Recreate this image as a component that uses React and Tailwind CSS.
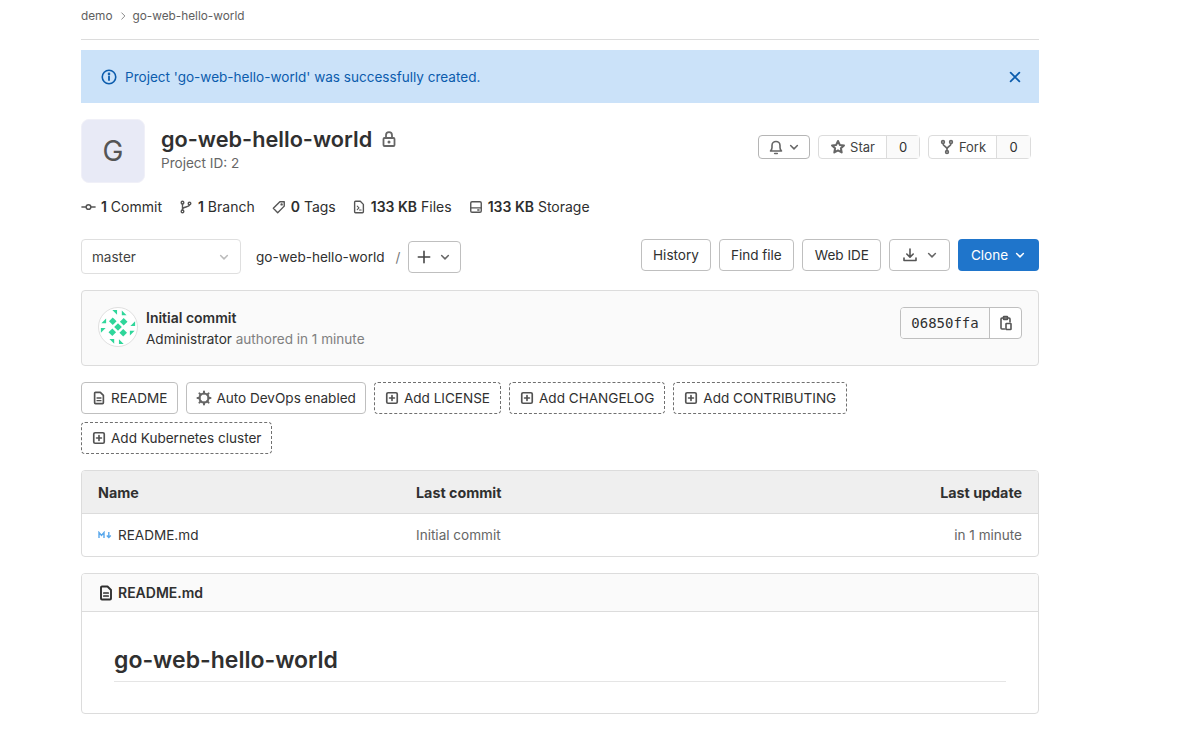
import React from 'react'

const Icon = ({ className = 'w-4 h-4', children }) => (
  <svg viewBox="0 0 16 16" fill="none" stroke="currentColor" strokeWidth="1.6" strokeLinecap="round" strokeLinejoin="round" className={`shrink-0 ${className}`}>
    {children}
  </svg>
)

const Chevron = ({ className = '' }) => (
  <Icon className={`w-3 h-3 ${className}`}>
    <path d="M3.5 6l4.5 4.5L12.5 6" strokeWidth="2" />
  </Icon>
)

const DocIcon = ({ className }) => (
  <Icon className={className}>
    <path d="M3 2.500a1 1 0 0 1 1-1h5.500L13 5v8.500a1 1 0 0 1-1 1H4a1 1 0 0 1-1-1z" strokeWidth="1.900" />
    <path d="M5.800 8h4.400M5.800 11h4.400" strokeWidth="1.700" />
  </Icon>
)

const AddIcon = () => (
  <Icon className="w-3.5 h-3.5 text-[#525252]">
    <rect x="2" y="2" width="12" height="12" rx="1.500" strokeWidth="1.900" />
    <path d="M8 5.200v5.600M5.200 8h5.600" strokeWidth="1.900" />
  </Icon>
)

const Stat = ({ icon, value, label, className = '' }) => (
  <div className={`flex items-center gap-[5px] ${className}`}>
    {icon}
    <span className="text-sm text-[#2e2e2e]"><span className="font-semibold">{value}</span> {label}</span>
  </div>
)

const Button = ({ children, className = '' }) => (
  <div className={`h-8 flex items-center rounded border border-[#bfbfbf] bg-white text-[#303030] ${className}`}>{children}</div>
)

const Shortcut = ({ icon, label, dashed }) => (
  <div className={`h-8 flex items-center gap-[5px] pl-[10px] pr-[10px] rounded border ${dashed ? 'border-dashed border-[#707070]' : 'border-[#bfbfbf]'} text-[#303030]`}>
    {icon}
    <span>{label}</span>
  </div>
)

// the identicon repeats one quadrant four times
const AvatarQuadrant = () => (
  <g fill="#2fd69a">
    <path d="M14 2l5 0 0 5z" />
    <path d="M24 2.500l5 5h-5z" />
    <path d="M14.500 10l4 4-4 4-4-4z" />
  </g>
)

const Avatar = () => (
  <svg viewBox="0 0 40 40" className="w-10 h-10 shrink-0 rounded-full border border-[#e0e0e0] bg-white">
    <AvatarQuadrant />
    <g transform="rotate(90 20 20)"><AvatarQuadrant /></g>
    <g transform="rotate(180 20 20)"><AvatarQuadrant /></g>
    <g transform="rotate(270 20 20)"><AvatarQuadrant /></g>
    <path d="M20 16l4 4-4 4-4-4z" fill="#2fd69a" />
  </svg>
)

const App = () => {
  return (
    <div className="min-h-[752px] bg-white pl-[81px] pr-[155px] text-[13.55px] leading-[22px] text-[#303030] font-['Inter',sans-serif]">
      {/* Breadcrumb */}
      <div className="h-10 flex items-center gap-[5px] pb-[7px] border-b border-[#dcdcdc] text-[11.8px] text-[#5e5e5e]">
        <span>demo</span>
        <Icon className="w-2.5 h-2.5 text-[#8a8a8a]"><path d="M6 3l5 5-5 5" /></Icon>
        <span>go-web-hello-world</span>
      </div>

      {/* Flash */}
      <div className="mt-2.5 h-[53px] flex items-center justify-between pl-5 pr-[17px] bg-[#cbe2f9] text-[#0b5cad]">
        <div className="flex items-center gap-2">
          <Icon>
            <circle cx="8" cy="8" r="6.750" />
            <path d="M8 7.500v3.500" strokeWidth="1.800" />
            <circle cx="8" cy="4.900" r="0.500" fill="currentColor" />
          </Icon>
          <span>Project 'go-web-hello-world' was successfully created.</span>
        </div>
        <Icon className="w-3.5 h-3.5">
          <path d="M3 3l10 10M13 3L3 13" strokeWidth="2" />
        </Icon>
      </div>

      {/* Project header */}
      <div className="mt-4 flex items-start justify-between">
        <div className="flex items-start gap-4">
          <div className="w-16 h-16 rounded-lg border border-[#f0f0f8] bg-[#e8eaf6] flex items-center justify-center text-[28px] text-[#555]">G</div>
          <div className="pt-[7px]">
            <div className="flex items-center gap-[9px]">
              <h1 className="text-[21.7px] leading-[26px] font-semibold text-[#303030]">go-web-hello-world</h1>
              <Icon className="w-4 h-4 text-[#666]">
                <rect x="2.500" y="7" width="11" height="8" rx="1" strokeWidth="1.800" />
                <path d="M5 7V4.200a3 3 0 0 1 6 0V7" strokeWidth="1.800" />
                <circle cx="8" cy="11" r="0.700" fill="currentColor" />
              </Icon>
            </div>
            <div className="mt-px leading-5 text-[#666]">Project ID: 2</div>
          </div>
        </div>
        <div className="mt-4 mr-2 flex items-center gap-2 text-[13px]">
          <div className="w-[52px] h-6 flex items-center justify-center gap-1 rounded border border-[#b5b5b5] text-[#666]">
            <Icon className="w-4 h-4">
              <path d="M2.500 12h11c-1-1-1.500-2-1.500-3.500V6.500a4 4 0 0 0-8 0v2C4 10 3.500 11 2.500 12z" />
              <path d="M6.700 14.500h2.600" />
            </Icon>
            <Chevron />
          </div>
          <div className="h-6 flex items-center rounded border border-[#dcdcdc]">
            <div className="w-[67px] h-full flex items-center justify-center gap-1 text-[#424242]">
              <Icon className="w-4 h-4 text-[#666]">
                <path d="M8 2l1.800 3.900 4.200.5-3.100 2.900.8 4.200L8 11.400l-3.700 2.100.8-4.200L2 6.400l4.200-.5z" strokeWidth="2" />
              </Icon>
              Star
            </div>
            <div className="w-[33px] h-full flex items-center justify-center border-l border-[#dcdcdc] bg-[#fafafa]">0</div>
          </div>
          <div className="h-6 flex items-center rounded border border-[#dcdcdc]">
            <div className="w-[67px] h-full flex items-center justify-center gap-1 text-[#424242]">
              <Icon className="w-4 h-4 text-[#666]">
                <circle cx="4" cy="3" r="1.400" />
                <circle cx="12" cy="3" r="1.400" />
                <circle cx="8" cy="13" r="1.400" />
                <path d="M4 4.500c0 3 4 3 4 5.500v1.500M12 4.500c0 3-4 3-4 5.500" />
              </Icon>
              Fork
            </div>
            <div className="w-[34px] h-full flex items-center justify-center border-l border-[#dcdcdc] bg-[#fafafa]">0</div>
          </div>
        </div>
      </div>

      {/* Stats */}
      <div className="mt-[15px] h-[18px] flex items-center gap-[17px]">
        <Stat value="1" label="Commit" icon={<Icon className="w-[15px] h-4 text-[#555]"><circle cx="8" cy="8" r="2.500" /><path d="M1 8h4.500M10.500 8H15" /></Icon>} />
        <Stat value="1" label="Branch" icon={<Icon className="w-3.5 h-3.5 text-[#555]"><circle cx="4" cy="3" r="1.500" /><circle cx="4" cy="13" r="1.500" /><circle cx="12" cy="4" r="1.500" /><path d="M4 4.500v7M12 5.500c0 3-8 2-8 5" /></Icon>} />
        <Stat value="0" label="Tags" icon={<Icon className="w-3.5 h-3.5 text-[#555]"><path d="M9 2h5v5l-7.500 7.500-5-5z" /><circle cx="11" cy="5" r="0.600" fill="currentColor" /></Icon>} />
        <Stat className="-ml-px" value="133 KB" label="Files" icon={<Icon className="w-3.5 h-3.5 text-[#555]"><path d="M3 2.500a1 1 0 0 1 1-1h5.500L13 5v8.500a1 1 0 0 1-1 1H4a1 1 0 0 1-1-1z" /><path d="M6 7l2 2-2 2M8.500 11.500h2" strokeWidth="1.200" /></Icon>} />
        <Stat value="133 KB" label="Storage" icon={<Icon className="w-3.5 h-3.5 text-[#555]"><rect x="2" y="2" width="12" height="12" rx="1.500" /><path d="M2 9h12M10 11.500h1.500" /></Icon>} />
      </div>

      {/* Toolbar */}
      <div className="mt-[23px] flex items-start justify-between">
        <div className="flex items-center">
          <div className="w-40 h-[35px] flex items-center justify-between pl-2.5 pr-2.5 rounded border border-[#dfdfdf] text-[#424242]">
            master
            <Chevron className="text-[#bbb]" />
          </div>
          <span className="ml-[15px]">go-web-hello-world</span>
          <span className="ml-[11px] text-[#777]">/</span>
          <Button className="ml-[7px] mt-px w-[53px] justify-center gap-2">
            <Icon className="w-3.5 h-3.5 text-[#444]"><path d="M8 1.500v13M1.500 8h13" strokeWidth="1.800" /></Icon>
            <Chevron className="text-[#666]" />
          </Button>
        </div>
        <div className="flex items-center gap-2">
          <Button className="px-[11px]">History</Button>
          <Button className="px-[11px]">Find file</Button>
          <Button className="pl-3 pr-[11px]">Web IDE</Button>
          <Button className="w-[61px] justify-center gap-2">
            <Icon className="w-4 h-4 text-[#555]"><path d="M8 2v8M4.800 7L8 10.200 11.200 7M2 11v2.500h12V11" /></Icon>
            <Chevron className="text-[#666]" />
          </Button>
          <div className="w-[81px] h-8 flex items-center justify-center gap-1.5 rounded bg-[#1f75cb] text-white">
            Clone
            <Chevron />
          </div>
        </div>
      </div>

      {/* Last commit */}
      <div className="mt-4 h-[76px] flex items-start justify-between pt-4 px-4 rounded border border-[#dcdcdc] bg-[#fafafa]">
        <div className="flex items-start gap-2">
          <Avatar />
          <div>
            <div className="text-sm font-semibold text-[#303030] leading-[21px]">Initial commit</div>
            <div className="mt-px leading-[21px]">Administrator <span className="text-[#808080]">authored in 1 minute</span></div>
          </div>
        </div>
        <div className="h-8 flex rounded border border-[#bfbfbf] bg-white overflow-hidden">
          <div className="w-[89px] flex items-center justify-center bg-[#fafafa] border-r border-[#bfbfbf] font-['DejaVu_Sans_Mono',monospace] text-sm text-[#303030]">06850ffa</div>
          <div className="w-[31px] flex items-center justify-center">
            <Icon className="w-4 h-4 text-[#555]">
              <path d="M6.500 14H4a1 1 0 0 1-1-1V4a1 1 0 0 1 1-1h7a1 1 0 0 1 1 1v3" />
              <rect x="5.500" y="1.500" width="4" height="3" rx="0.500" />
              <rect x="8" y="8.500" width="5" height="6" rx="0.500" />
            </Icon>
          </div>
        </div>
      </div>

      {/* Shortcuts */}
      <div className="mt-4 flex flex-wrap gap-x-2 gap-y-2">
        <Shortcut label="README" icon={<DocIcon className="w-3.5 h-3.5 text-[#525252]" />} />
        <div className="h-8 flex items-center gap-1 pl-[9px] pr-[9px] rounded border border-[#bfbfbf]">
          <Icon className="w-4 h-4 text-[#666]">
            <circle cx="8" cy="8" r="4.500" strokeWidth="2.200" />
            <path d="M8 1.500v2M8 12.500v2M1.500 8h2M12.500 8h2M3.400 3.400l1.400 1.400M11.200 11.200l1.400 1.400M12.600 3.400l-1.400 1.400M4.800 11.200l-1.400 1.400" strokeWidth="2" />
          </Icon>
          <span>Auto DevOps enabled</span>
        </div>
        <Shortcut dashed label="Add LICENSE" icon={<AddIcon />} />
        <Shortcut dashed label="Add CHANGELOG" icon={<AddIcon />} />
        <Shortcut dashed label="Add CONTRIBUTING" icon={<AddIcon />} />
        <Shortcut dashed label="Add Kubernetes cluster" icon={<AddIcon />} />
      </div>

      {/* File table */}
      <div className="mt-4 rounded border border-[#dcdcdc] overflow-hidden">
        <div className="h-[43px] grid grid-cols-[318px_1fr_auto] items-center px-4 pt-px bg-[#efefef] border-b border-[#dcdcdc] text-[14.3px] leading-[22px] font-bold text-[#303030]">
          <span>Name</span>
          <span>Last commit</span>
          <span>Last update</span>
        </div>
        <div className="h-[42px] grid grid-cols-[318px_1fr_auto] items-center px-4">
          <div className="flex items-center gap-1.5">
            <svg viewBox="0 0 14 8" className="w-[14px] h-2 text-[#5aa8ec]" fill="none" stroke="currentColor" strokeWidth="1.400">
              <path d="M1 7V1.500l2.500 3 2.500-3V7" />
              <path d="M10.800 1v5M8.800 4.500l2 2 2-2" />
            </svg>
            <span>README.md</span>
          </div>
          <span className="text-[#666]">Initial commit</span>
          <span className="text-[#666]">in 1 minute</span>
        </div>
      </div>

      {/* Readme */}
      <div className="mt-4 h-[141px] rounded border border-[#dcdcdc] overflow-hidden">
        <div className="h-[38px] flex items-center gap-1 px-4 bg-[#fafafa] border-b border-[#dcdcdc] text-sm font-semibold">
          <DocIcon className="w-4 h-4 text-[#303030]" />
          <span>README.md</span>
        </div>
        <div className="pt-[33px] px-8">
          <h2 className="pb-1.5 border-b border-[#e5e5e5] text-[23px] leading-[30px] font-semibold text-[#303030]">go-web-hello-world</h2>
        </div>
      </div>
    </div>
  )
}

export default App
